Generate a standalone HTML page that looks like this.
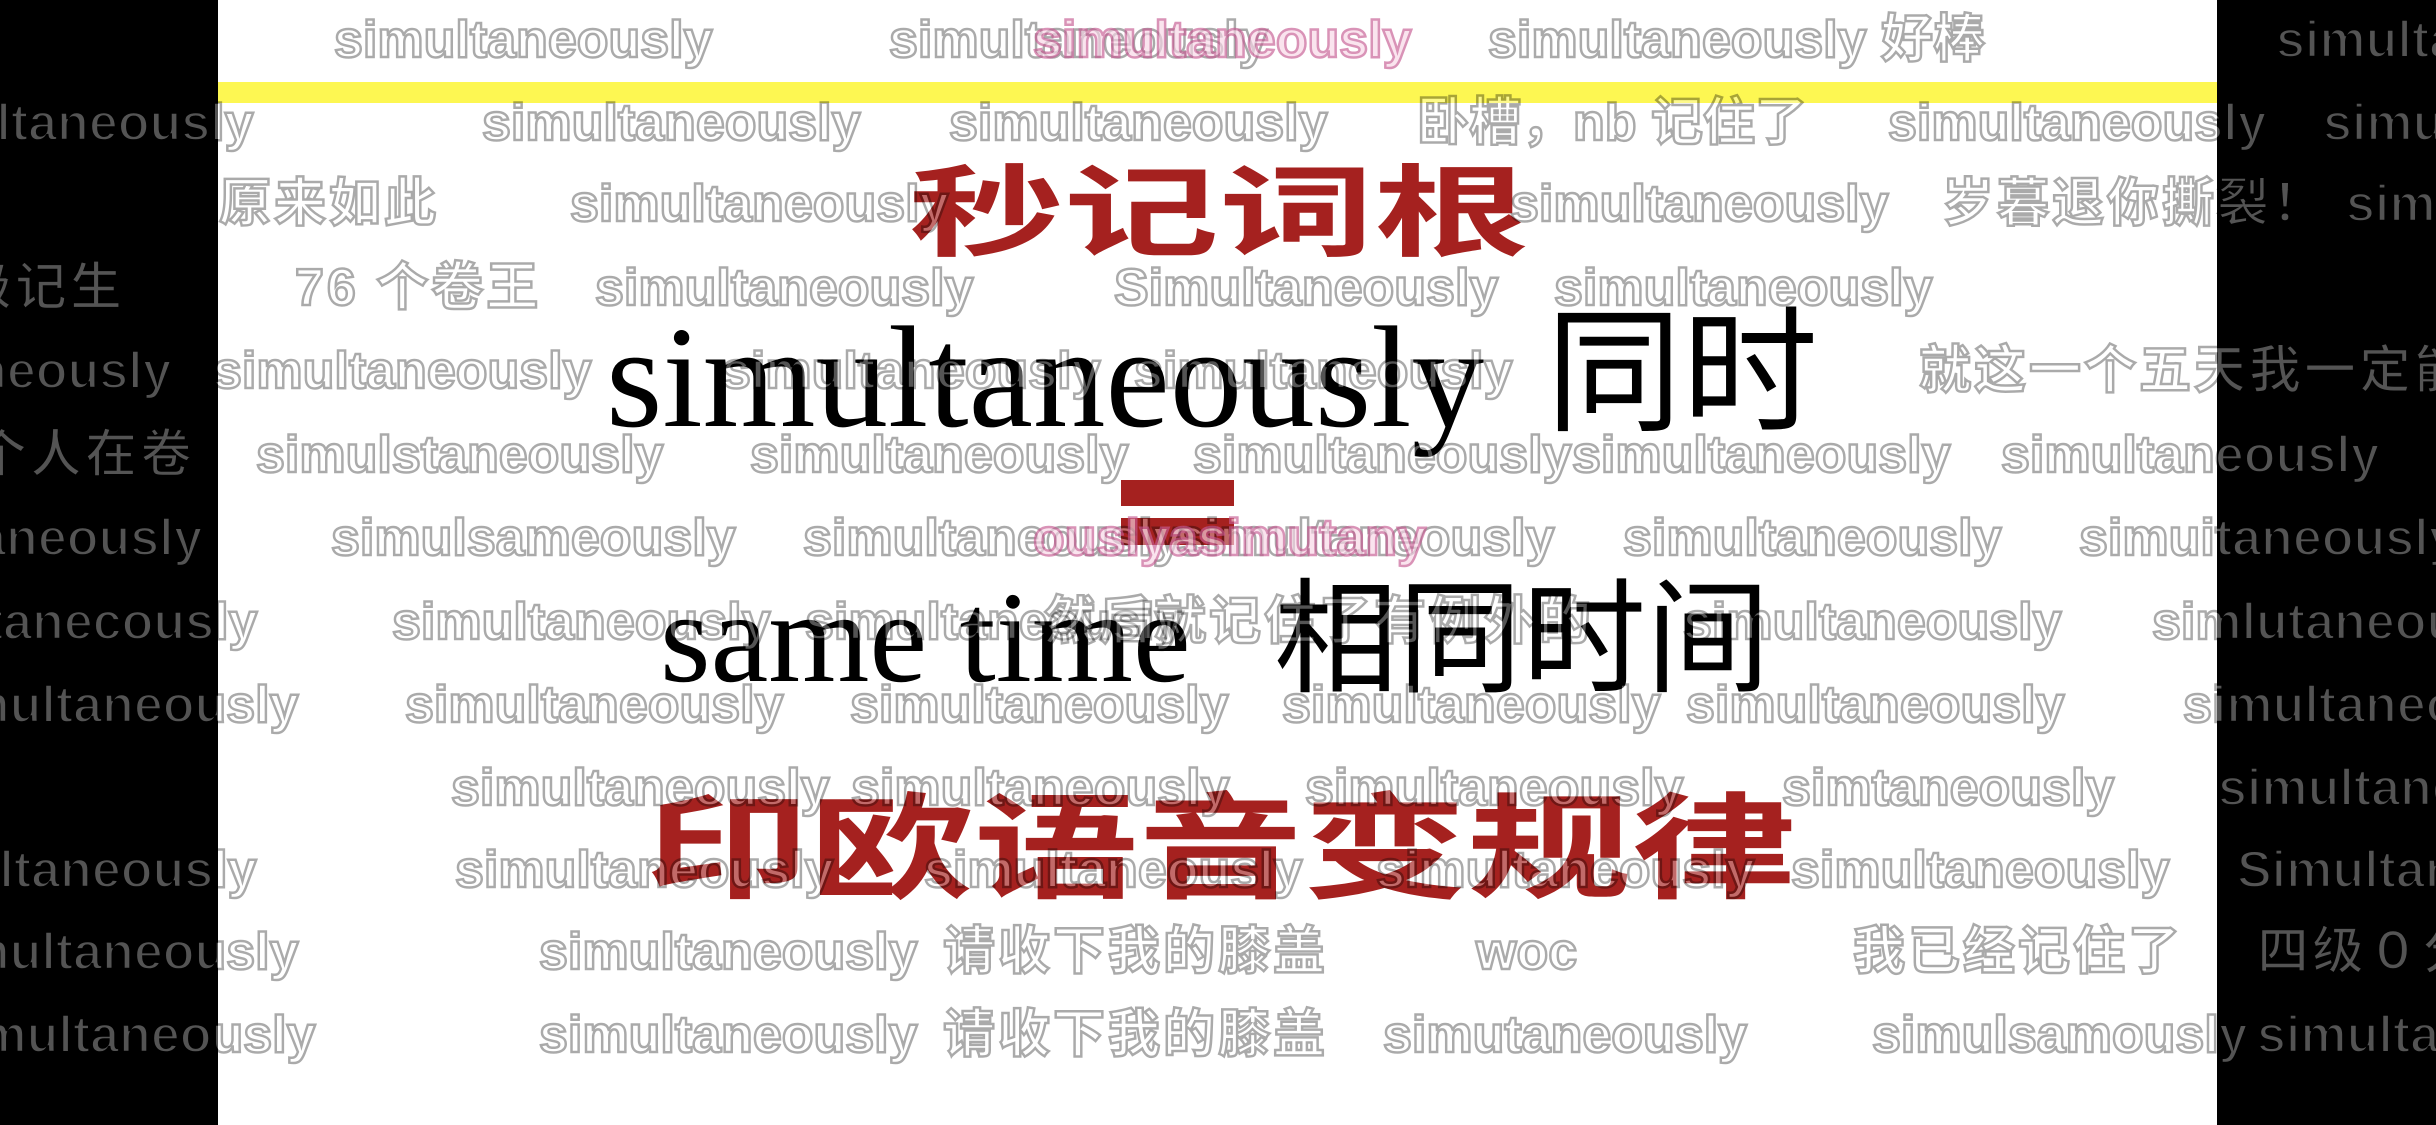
<!DOCTYPE html>
<html><head><meta charset="utf-8">
<style>
html,body{margin:0;padding:0}
body{width:2436px;height:1125px;position:relative;overflow:hidden;background:#000;font-family:"Liberation Sans","Noto Sans CJK SC",sans-serif}
#w{position:absolute;left:218px;top:0;width:1999px;height:1125px;background:#fff}
#y{position:absolute;left:218px;top:82px;width:1999px;height:21px;background:#fdf752}
.m{position:absolute;white-space:nowrap}
.red{color:#a5211f;font-family:"Noto Sans CJK SC",sans-serif;font-weight:700;transform-origin:left top}
.ser{font-family:"Liberation Serif",serif;color:#000;line-height:1}
.cjk{font-family:"Noto Sans CJK SC",sans-serif;color:#000;line-height:1}
.d{position:absolute;white-space:nowrap;font-size:52px;line-height:52px;font-weight:bold;color:#fff;-webkit-text-stroke:2.5px #000;opacity:.33}
.c{letter-spacing:3px}
.p{color:#f8d6e6;-webkit-text-stroke:2.5px #c65a92;opacity:.65}
</style></head><body>
<div id="w"></div>
<div id="y"></div>

<div class="m red" style="left:909px;top:150px;font-size:100px;line-height:110px;transform:scaleX(1.55)">秒记词根</div>
<div class="m ser" style="left:606px;top:306px;font-size:145px">simultaneously</div>
<div class="m cjk" style="left:1546px;top:294px;font-size:136px">同时</div>
<div class="m" style="left:1121px;top:480px;width:113px;height:26px;background:#a5211f"></div>
<div class="m" style="left:1121px;top:518px;width:113px;height:27px;background:#a5211f"></div>
<div class="m ser" style="left:660px;top:573px;font-size:130px">same time</div>
<div class="m cjk" style="left:1274px;top:566px;font-size:124px">相同时间</div>
<div class="m red" style="left:645px;top:778px;font-size:115px;line-height:125px;transform:scaleX(1.43)">印欧语音变规律</div>

<div class="d" style="left:334px;top:14px">simultaneously</div>
<div class="d" style="left:889px;top:14px">simultaneously</div>
<div class="d p" style="left:1033px;top:14px">simultaneously</div>
<div class="d" style="left:1488px;top:14px">simultaneously 好棒</div>
<div class="d" style="left:2276px;top:14px">simultaneously</div>
<div class="d" style="left:-125px;top:97px">simultaneously</div>
<div class="d" style="left:482px;top:97px">simultaneously</div>
<div class="d" style="left:949px;top:97px">simultaneously</div>
<div class="d" style="left:1417px;top:97px">卧槽，nb 记住了</div>
<div class="d" style="left:1888px;top:97px">simultaneously</div>
<div class="d" style="left:2323px;top:97px">simultaneously</div>
<div class="d c" style="left:219px;top:178px">原来如此</div>
<div class="d" style="left:570px;top:178px">simultaneously</div>
<div class="d" style="left:1510px;top:178px">simultaneously</div>
<div class="d c" style="left:1942px;top:178px">岁暮退你撕裂！</div>
<div class="d" style="left:2346px;top:178px">simultaneously</div>
<div class="d c" style="left:-95px;top:262px">四级记生</div>
<div class="d c" style="left:295px;top:262px">76 个卷王</div>
<div class="d" style="left:595px;top:262px">simultaneously</div>
<div class="d" style="left:1114px;top:262px">Simultaneously</div>
<div class="d" style="left:1554px;top:262px">simultaneously</div>
<div class="d" style="left:-207px;top:345px">simultaneously</div>
<div class="d" style="left:213px;top:345px">simultaneously</div>
<div class="d" style="left:722px;top:345px">simultaneously</div>
<div class="d" style="left:1134px;top:345px">simultaneously</div>
<div class="d c" style="left:1919px;top:345px">就这一个五天我一定能记住</div>
<div class="d c" style="left:-80px;top:429px">一个人在卷</div>
<div class="d" style="left:256px;top:429px">simulstaneously</div>
<div class="d" style="left:750px;top:429px">simultaneously</div>
<div class="d" style="left:1193px;top:429px">simultaneously</div>
<div class="d" style="left:1572px;top:429px">simultaneously</div>
<div class="d" style="left:2001px;top:429px">simultaneously</div>
<div class="d" style="left:-176px;top:512px">simultaneously</div>
<div class="d" style="left:331px;top:512px">simulsameously</div>
<div class="d" style="left:803px;top:512px">simultaneously</div>
<div class="d" style="left:1176px;top:512px">simultaneously</div>
<div class="d p" style="left:1033px;top:512px">ouslyasimutany</div>
<div class="d" style="left:1623px;top:512px">simultaneously</div>
<div class="d" style="left:2079px;top:512px">simuitaneously</div>
<div class="d" style="left:-150px;top:596px">simultanecously</div>
<div class="d" style="left:392px;top:596px">simultaneously</div>
<div class="d" style="left:805px;top:596px">simultaneously</div>
<div class="d c" style="left:1044px;top:596px">然后就记住了有例外的</div>
<div class="d" style="left:1683px;top:596px">simultaneously</div>
<div class="d" style="left:2152px;top:596px">simlutaneously</div>
<div class="d" style="left:-80px;top:679px">simultaneously</div>
<div class="d" style="left:405px;top:679px">simultaneously</div>
<div class="d" style="left:850px;top:679px">simultaneously</div>
<div class="d" style="left:1282px;top:679px">simultaneously</div>
<div class="d" style="left:1686px;top:679px">simultaneously</div>
<div class="d" style="left:2183px;top:679px">simultaneously</div>
<div class="d" style="left:451px;top:762px">simultaneously</div>
<div class="d" style="left:851px;top:762px">simultaneously</div>
<div class="d" style="left:1305px;top:762px">simultaneously</div>
<div class="d" style="left:1782px;top:762px">simtaneously</div>
<div class="d" style="left:2218px;top:762px">simultaneously</div>
<div class="d" style="left:-122px;top:844px">simultaneously</div>
<div class="d" style="left:455px;top:844px">simultaneously</div>
<div class="d" style="left:924px;top:844px">simultaneously</div>
<div class="d" style="left:1376px;top:844px">simultaneously</div>
<div class="d" style="left:1791px;top:844px">simultaneously</div>
<div class="d" style="left:2237px;top:844px">Simultaneously</div>
<div class="d" style="left:-80px;top:926px">simultaneously</div>
<div class="d" style="left:539px;top:926px">simultaneously</div>
<div class="d c" style="left:943px;top:926px">请收下我的膝盖</div>
<div class="d" style="left:1476px;top:926px">woc</div>
<div class="d c" style="left:1853px;top:926px">我已经记住了</div>
<div class="d c" style="left:2257px;top:926px">四级０分</div>
<div class="d" style="left:-63px;top:1009px">simultaneously</div>
<div class="d" style="left:539px;top:1009px">simultaneously</div>
<div class="d c" style="left:943px;top:1009px">请收下我的膝盖</div>
<div class="d" style="left:1383px;top:1009px">simutaneously</div>
<div class="d" style="left:1872px;top:1009px">simulsamously</div>
<div class="d" style="left:2257px;top:1009px">simultaneously</div>
</body></html>
